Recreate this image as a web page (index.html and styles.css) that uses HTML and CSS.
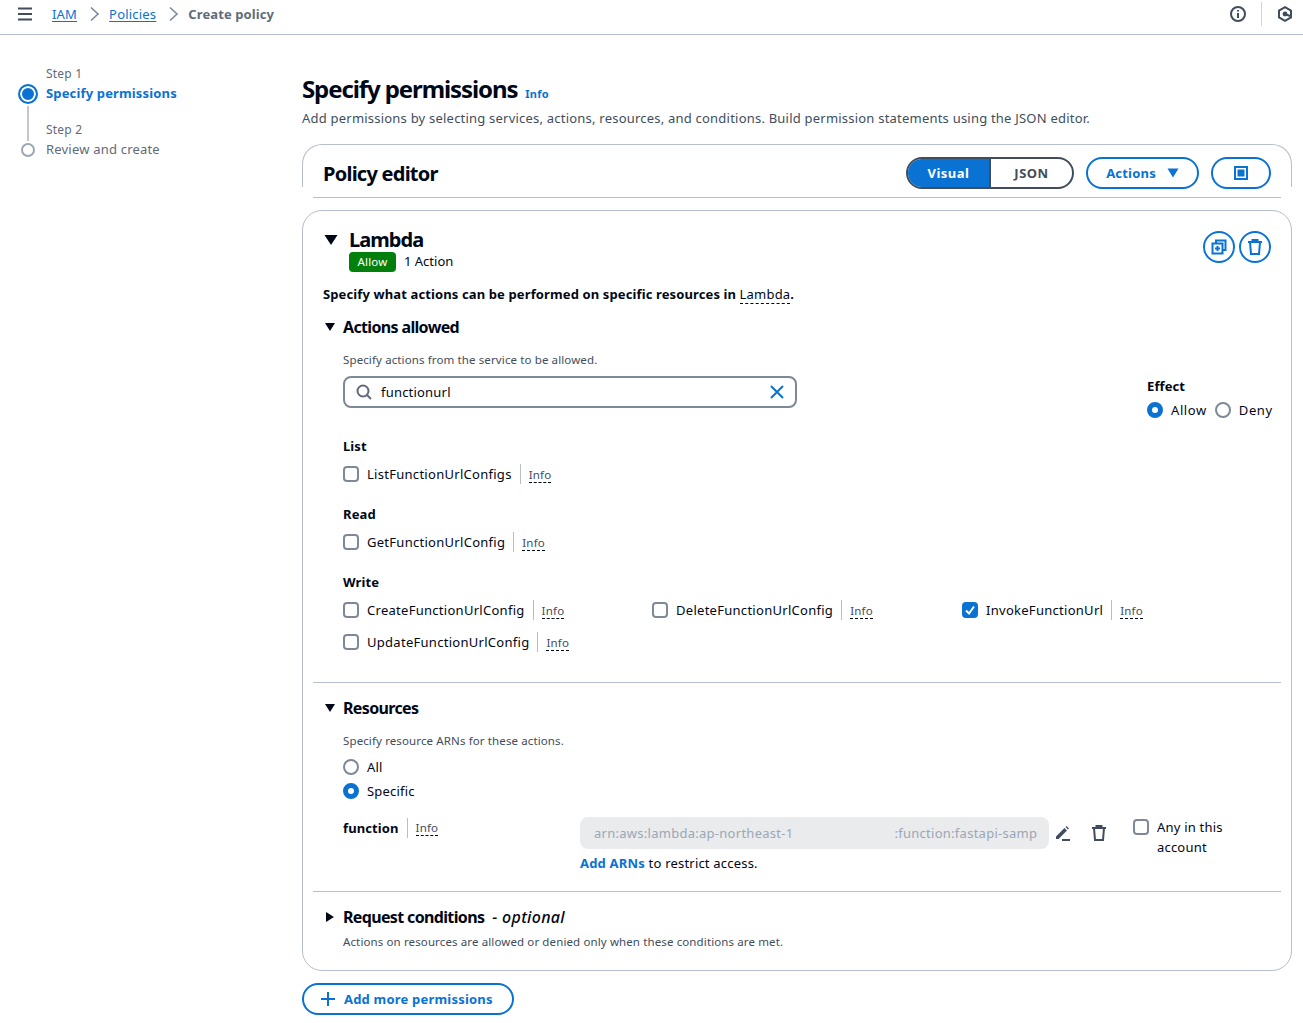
FILE: index.html
```html
<!DOCTYPE html>
<html lang="en">
<head>
    <meta charset="UTF-8">
    <title>Create policy</title>
    <link rel="stylesheet" href="styles.css">
</head>
<body>
    <header class="topbar">
        <svg class="menu-icon" width="16" height="16" viewBox="0 0 16 16"><path d="M1 2.500h14M1 8h14M1 13.500h14"/></svg>
        <nav class="crumbs">
            <a href="#">IAM</a>
            <svg class="crumb-arrow" width="16" height="16" viewBox="0 0 16 16"><path d="M5 1.500l7 6.500-7 6.500"/></svg>
            <a href="#">Policies</a>
            <svg class="crumb-arrow" width="16" height="16" viewBox="0 0 16 16"><path d="M5 1.500l7 6.500-7 6.500"/></svg>
            <span class="crumb-current">Create policy</span>
        </nav>
        <div class="top-tools">
            <svg class="tool-icon" width="16" height="16" viewBox="0 0 16 16"><circle cx="8" cy="8" r="7"/><path d="M8 7v5M8 4v1.600"/></svg>
            <span class="tool-sep"></span>
            <svg class="tool-icon hex" width="16" height="16" viewBox="0 0 16 16"><path d="M8 1.200l6 3.400v6.800l-6 3.400-6-3.400V4.600z"/><circle class="hex-dot" cx="8" cy="8" r="2.400"/><path d="M8 8l5 2"/></svg>
        </div>
    </header>

    <div class="page">
        <aside class="sidebar">
            <ol class="steps">
                <li class="step step-active">
                    <div class="step-marker">
                        <span class="step-dot"></span>
                        <span class="step-line"></span>
                    </div>
                    <div>
                        <div class="step-num">Step 1</div>
                        <div class="step-name">Specify permissions</div>
                    </div>
                </li>
                <li class="step">
                    <div class="step-marker">
                        <span class="step-line"></span>
                        <span class="step-dot"></span>
                    </div>
                    <div>
                        <div class="step-num">Step 2</div>
                        <div class="step-name">Review and create</div>
                    </div>
                </li>
            </ol>
        </aside>

        <main class="content">
            <div class="page-title">
                <h1>Specify permissions</h1>
                <a class="title-info" href="#">Info</a>
            </div>
            <p class="page-desc">Add permissions by selecting services, actions, resources, and conditions. Build permission statements using the JSON editor.</p>

            <div class="editor-head">
                <h2>Policy editor</h2>
                <div class="editor-tools">
                    <div class="segment">
                        <span class="seg seg-on">Visual</span>
                        <span class="seg">JSON</span>
                    </div>
                    <button class="btn btn-actions">Actions <svg width="12" height="10" viewBox="0 0 12 10"><path class="fill-blue" d="M0.500 0.500h11L6 9.500z"/></svg></button>
                    <button class="btn btn-max"><svg width="14" height="14" viewBox="0 0 14 14"><path class="fill-blue" d="M0 0h14v14H0z"/><path class="fill-white" d="M2 2h10v10H2z"/><path class="fill-blue" d="M3.500 3.500h7v7h-7z"/></svg></button>
                </div>
            </div>
            <div class="editor-rule"></div>

            <section class="statement">
                <div class="statement-tools">
                    <button class="round-btn"><svg width="16" height="16" viewBox="0 0 16 16"><path d="M5 4V1.500h9.500V11H12"/><path d="M1.500 4.500H11.500V14.500H1.500z"/><path d="M6.500 7v5M4 9.500h5"/></svg></button>
                    <button class="round-btn"><svg width="16" height="16" viewBox="0 0 16 16"><path d="M1 3h14M5.500 3V1h5v2M3 3l1 12h8l1-12"/></svg></button>
                </div>
                <div class="service">
                    <svg class="caret-big" width="14" height="10" viewBox="0 0 14 10"><path d="M0.500 0h13L7 10z"/></svg>
                    <div>
                        <h3>Lambda</h3>
                        <div class="service-meta"><span class="badge">Allow</span><span class="meta-count">1 Action</span></div>
                    </div>
                </div>
                <p class="lead">Specify what actions can be performed on specific resources in <span class="dashed">Lambda</span>.</p>

                <h4 class="sub-head"><svg class="caret" width="10" height="8" viewBox="0 0 10 8"><path d="M0 0h10L5 8z"/></svg>Actions allowed</h4>
                <div class="indent">
                    <p class="hint hint-top">Specify actions from the service to be allowed.</p>
                    <div class="search-row">
                        <div class="search">
                            <svg class="search-icon" width="16" height="16" viewBox="0 0 16 16"><circle cx="7" cy="7" r="5.500"/><path d="M11 11l4 4"/></svg>
                            <span class="search-text">functionurl</span>
                            <svg class="clear-icon" width="14" height="14" viewBox="0 0 14 14"><path d="M1 1l12 12M13 1L1 13"/></svg>
                        </div>
                        <div class="effect">
                            <div class="group-label">Effect</div>
                            <div class="effect-opts">
                                <label class="opt"><span class="radio radio-on"></span>Allow</label>
                                <label class="opt"><span class="radio"></span>Deny</label>
                            </div>
                        </div>
                    </div>

                    <div class="group-label group-first">List</div>
                    <div class="action-grid">
                        <div class="action"><span class="check"></span><span>ListFunctionUrlConfigs</span><span class="sep"></span><a class="info" href="#">Info</a></div>
                    </div>

                    <div class="group-label group-next">Read</div>
                    <div class="action-grid">
                        <div class="action"><span class="check"></span><span>GetFunctionUrlConfig</span><span class="sep"></span><a class="info" href="#">Info</a></div>
                    </div>

                    <div class="group-label group-next">Write</div>
                    <div class="action-grid">
                        <div class="action"><span class="check"></span><span>CreateFunctionUrlConfig</span><span class="sep"></span><a class="info" href="#">Info</a></div>
                        <div class="action"><span class="check"></span><span>DeleteFunctionUrlConfig</span><span class="sep"></span><a class="info" href="#">Info</a></div>
                        <div class="action">
                            <span class="check check-on"><svg width="12" height="12" viewBox="0 0 12 12"><path d="M2 6.500l3 3 5-7"/></svg></span>
                            <span>InvokeFunctionUrl</span><span class="sep"></span><a class="info" href="#">Info</a>
                        </div>
                        <div class="action"><span class="check"></span><span>UpdateFunctionUrlConfig</span><span class="sep"></span><a class="info" href="#">Info</a></div>
                    </div>
                </div>

                <div class="rule rule-actions"></div>

                <h4 class="sub-head"><svg class="caret" width="10" height="8" viewBox="0 0 10 8"><path d="M0 0h10L5 8z"/></svg>Resources</h4>
                <div class="indent">
                    <p class="hint hint-top">Specify resource ARNs for these actions.</p>
                    <label class="opt opt-stack"><span class="radio"></span>All</label>
                    <label class="opt opt-stack opt-second"><span class="radio radio-on"></span>Specific</label>

                    <div class="arn-row">
                        <div class="arn-label"><strong>function</strong><span class="sep"></span><a class="info" href="#">Info</a></div>
                        <div>
                            <div class="arn-line">
                                <div class="arn-field"><span>arn:aws:lambda:ap-northeast-1</span><span class="arn-rest">:function:fastapi-samp</span></div>
                                <svg class="arn-icon" width="16" height="16" viewBox="0 0 16 16"><path class="fill-dark" d="M1 11.500L9.500 3l2.500 2.500L3.500 14H1zM10.500 2l1-1 2.500 2.500-1 1z"/><path d="M7 15h8"/></svg>
                                <svg class="arn-icon arn-trash" width="16" height="16" viewBox="0 0 16 16"><path d="M1 3h14M5.500 3V1h5v2M3 3l1 12h8l1-12"/></svg>
                            </div>
                            <p class="arn-note"><a href="#">Add ARNs</a> to restrict access.</p>
                        </div>
                        <label class="any-account"><span class="check"></span><span>Any in this<br>account</span></label>
                    </div>
                </div>

                <div class="rule rule-arn"></div>

                <h4 class="sub-head"><svg class="caret caret-side" width="8" height="10" viewBox="0 0 8 10"><path d="M0 0l8 5-8 5z"/></svg>Request conditions<em>- optional</em></h4>
                <p class="indent hint hint-last">Actions on resources are allowed or denied only when these conditions are met.</p>
            </section>

            <button class="btn btn-add"><svg width="16" height="16" viewBox="0 0 16 16"><path d="M8 1v14M1 8h14"/></svg>Add more permissions</button>
        </main>
    </div>
</body>
</html>
```

FILE: styles.css
```css
* {
    box-sizing: border-box;
}
body {
    margin: 0;
    font-family: "Noto Sans", sans-serif;
    font-size: 13px;
    line-height: 20px;
    letter-spacing: 0.2px;
    color: #000716;
    background: #fff;
    overflow: hidden;
}
h1, h2, h3, h4, p, ol {
    margin: 0;
    padding: 0;
}
a {
    color: #0972d3;
}
button {
    font-family: inherit;
    background: #fff;
    cursor: pointer;
}
svg {
    display: block;
    flex: none;
    fill: none;
}
.fill-blue {
    fill: #0972d3;
}
.fill-white {
    fill: #fff;
}
.fill-dark {
    fill: #414d5c;
    stroke: none;
}

/* top bar */
.topbar {
    height: 35px;
    border-bottom: 1px solid #b6bec9;
    display: flex;
    align-items: center;
    padding: 0 10px 6px 17px;
}
.menu-icon {
    stroke: #414d5c;
    stroke-width: 2;
}
.crumbs {
    display: flex;
    align-items: center;
    margin-left: 19px;
}
.crumbs a {
    text-decoration: underline;
    text-underline-offset: 2px;
}
.crumb-arrow {
    stroke: #7d8998;
    stroke-width: 1.600;
    margin: 0 7px 0 9px;
}
.crumb-current {
    font-weight: 700;
    letter-spacing: 0.1px;
    color: #5f6b7a;
}
.top-tools {
    margin-left: auto;
    display: flex;
    align-items: center;
}
.tool-icon {
    stroke: #414d5c;
    stroke-width: 2;
}
.tool-sep {
    width: 1px;
    height: 24px;
    background: #d1d5db;
    margin: 0 15px;
}
.hex-dot {
    fill: #414d5c;
    stroke: none;
}

/* wizard steps */
.page {
    display: flex;
}
.sidebar {
    width: 302px;
    flex: none;
    padding: 31px 0 0 18px;
}
.steps {
    list-style: none;
}
.step {
    display: flex;
    gap: 8px;
}
.step-marker {
    width: 20px;
    display: flex;
    flex-direction: column;
    align-items: center;
}
.step-dot {
    width: 14px;
    height: 14px;
    border-radius: 50%;
    border: 2px solid #9ba7b6;
    flex: none;
}
.step-line {
    width: 2px;
    background: #c6c6cd;
    flex: 1;
}
.step-active {
    height: 56px;
}
.step-active .step-dot {
    width: 20px;
    height: 20px;
    margin-top: 18px;
    margin-bottom: 2px;
    border: 2px solid #0972d3;
    background: #0972d3;
    box-shadow: inset 0 0 0 2px #fff;
}
.step:last-child .step-line {
    height: 19px;
    margin-bottom: 2px;
    flex: none;
}
.step-num {
    font-size: 12px;
    line-height: 16px;
    color: #5f6b7a;
    margin-bottom: 1px;
}
.step-name {
    color: #5f6b7a;
}
.step-active .step-name {
    color: #0972d3;
    font-weight: 700;
    letter-spacing: 0.15px;
}

/* main column */
.content {
    width: 990px;
    flex: none;
    padding: 37px 0 4px;
}
.page-title {
    display: flex;
    align-items: baseline;
    gap: 8px;
}
.page-title h1 {
    font-size: 24px;
    line-height: 33px;
    font-weight: 700;
    letter-spacing: -1.1px;
}
.title-info {
    font-size: 11px;
    font-weight: 700;
    text-decoration: none;
}
.page-desc {
    margin-top: 3px;
    color: #414d5c;
    letter-spacing: 0.215px;
}

/* policy editor header */
.editor-head {
    margin-top: 16px;
    height: 43px;
    border: 1px solid #b6bec9;
    border-bottom: 0;
    border-radius: 20px 20px 0 0;
    padding: 12px 20px 0;
    display: flex;
    justify-content: space-between;
}
.editor-head h2 {
    font-size: 20px;
    line-height: 34px;
    font-weight: 700;
    letter-spacing: -0.75px;
}
.editor-tools {
    display: flex;
    gap: 12px;
    height: 32px;
}
.segment {
    display: flex;
    width: 168px;
    border: 2px solid #414d5c;
    border-radius: 16px;
    overflow: hidden;
    background: #fff;
}
.seg {
    flex: 1;
    text-align: center;
    line-height: 28px;
    font-weight: 700;
    letter-spacing: 0.5px;
    color: #414d5c;
}
.seg-on {
    background: #0972d3;
    color: #fff;
    border-right: 2px solid #414d5c;
}
.btn {
    border: 2px solid #0972d3;
    border-radius: 16px;
    height: 32px;
    color: #0972d3;
    font-size: 13px;
    font-weight: 700;
    letter-spacing: 0.2px;
    display: flex;
    align-items: center;
    justify-content: center;
}
.btn-actions {
    width: 113px;
    gap: 11px;
    padding: 0;
}
.btn-max {
    width: 60px;
}
.editor-rule {
    margin: 10px 11px 0;
    border-top: 1px solid #b6bec9;
}

/* statement card */
.statement {
    position: relative;
    margin-top: 12px;
    height: 761px;
    border: 1px solid #b6bec9;
    border-radius: 20px;
    padding: 15px 20px 0;
}
.statement-tools {
    position: absolute;
    top: 20px;
    right: 20px;
    display: flex;
    gap: 4px;
}
.round-btn {
    width: 32px;
    height: 32px;
    padding: 0;
    border: 2px solid #0972d3;
    border-radius: 50%;
    display: flex;
    align-items: center;
    justify-content: center;
}
.round-btn svg {
    stroke: #0972d3;
    stroke-width: 2;
}
.service {
    display: flex;
    gap: 11px;
}
.caret-big {
    fill: #000716;
    margin: 9px 0 0 1px;
}
.service h3 {
    font-size: 20px;
    line-height: 28px;
    font-weight: 700;
    letter-spacing: -0.95px;
    margin-bottom: -2px;
}
.service-meta {
    display: flex;
    align-items: flex-start;
    gap: 8px;
}
.meta-count {
    letter-spacing: 0;
    line-height: 19px;
}
.badge {
    width: 47px;
    height: 20px;
    border-radius: 4px;
    background: #037f0c;
    color: #fff;
    font-size: 11.500px;
    text-align: center;
}
.lead {
    margin-top: 12px;
    font-weight: 700;
    letter-spacing: 0.12px;
}
.dashed {
    font-weight: 400;
    letter-spacing: 0.2px;
    border-bottom: 1px dashed #000716;
}
.sub-head {
    margin-top: 12px;
    display: flex;
    align-items: center;
    font-size: 16px;
    line-height: 22px;
    font-weight: 700;
    letter-spacing: -0.65px;
}
.caret {
    fill: #000716;
    margin: 0 8px 0 2px;
}
.caret-side {
    margin: 0 9px 0 3px;
}
.sub-head em {
    font-weight: 500;
    letter-spacing: 0.3px;
    margin-left: 8px;
}
.indent {
    padding-left: 20px;
}
.hint {
    font-size: 11.500px;
    line-height: 16px;
    letter-spacing: 0.12px;
    color: #414d5c;
}
.hint-top {
    margin-top: 14px;
    margin-bottom: 8px;
}
.hint-last {
    margin-top: 6px;
}
.search-row {
    display: flex;
    justify-content: space-between;
}
.search {
    width: 454px;
    height: 32px;
    border: 2px solid #7d8998;
    border-radius: 8px;
    display: flex;
    align-items: center;
    padding: 0 11px;
}
.search-icon {
    stroke: #5f6b7a;
    stroke-width: 2;
}
.search-text {
    margin-left: 9px;
}
.clear-icon {
    margin-left: auto;
    stroke: #0972d3;
    stroke-width: 2;
}
.effect {
    width: 124px;
}
.group-label {
    font-weight: 700;
    letter-spacing: 0.1px;
}
.group-first {
    margin-top: 16px;
    margin-bottom: 8px;
}
.group-next {
    margin-top: 20px;
    margin-bottom: 8px;
}
.effect-opts {
    display: flex;
    gap: 8px;
    margin-top: 4px;
    letter-spacing: 0.6px;
}
.opt {
    display: flex;
    align-items: center;
    gap: 8px;
}
.opt-stack {
    height: 20px;
}
.opt-second {
    margin-top: 4px;
}
.radio {
    width: 16px;
    height: 16px;
    border-radius: 50%;
    border: 2px solid #7d8998;
    flex: none;
}
.radio-on {
    border: 5px solid #0972d3;
}
.action-grid {
    display: grid;
    grid-template-columns: 309px 310px 1fr;
    row-gap: 12px;
}
.action {
    display: flex;
    align-items: center;
    height: 20px;
    letter-spacing: 0.28px;
}
.check {
    width: 16px;
    height: 16px;
    border: 2px solid #7d8998;
    border-radius: 4px;
    margin-right: 8px;
    flex: none;
}
.check-on {
    background: #0972d3;
    border-color: #0972d3;
    display: flex;
    align-items: center;
    justify-content: center;
}
.check-on svg {
    stroke: #fff;
    stroke-width: 2;
}
.sep {
    width: 1px;
    height: 20px;
    background: #b6bec9;
    margin: 0 8px;
}
.info {
    font-size: 11.500px;
    line-height: 15px;
    letter-spacing: 0.2px;
    color: #414d5c;
    text-decoration: none;
    border-bottom: 1px dashed #000716;
    margin-top: 2px;
}
.rule {
    margin-left: -10px;
    margin-right: -10px;
    border-top: 1px solid #b6bec9;
}
.rule-actions {
    margin-top: 30px;
    margin-bottom: 14px;
}
.rule-arn {
    margin-top: 18px;
    margin-bottom: 14px;
}

/* arn row */
.arn-row {
    display: flex;
    margin-top: 16px;
}
.arn-label {
    width: 237px;
    flex: none;
    display: flex;
    align-items: flex-start;
    height: 20px;
    margin-top: 1px;
}
.arn-label strong {
    letter-spacing: 0.1px;
}
.arn-label .info {
    margin-top: 2px;
}
.arn-line {
    display: flex;
    align-items: center;
}
.arn-field {
    width: 469px;
    height: 32px;
    padding: 0 14px;
    background: #e9ebed;
    border-radius: 8px;
    color: #9ba7b6;
    line-height: 32px;
    letter-spacing: 0.27px;
    white-space: nowrap;
    overflow: hidden;
}
.arn-rest {
    margin-left: 101px;
}
.arn-icon {
    stroke: #414d5c;
    stroke-width: 2;
    margin-left: 6px;
}
.arn-trash {
    margin-left: 20px;
}
.arn-note {
    margin-top: 4px;
}
.arn-note a {
    font-weight: 700;
    text-decoration: none;
}
.any-account {
    margin-left: 26px;
    display: flex;
    align-items: flex-start;
    white-space: nowrap;
}
.any-account .check {
    margin-top: 2px;
}
.btn-add {
    margin-top: 12px;
    width: 212px;
    gap: 8px;
    justify-content: flex-start;
    padding: 0 0 0 16px;
}
.btn-add svg {
    stroke: #0972d3;
    stroke-width: 2;
}
```
